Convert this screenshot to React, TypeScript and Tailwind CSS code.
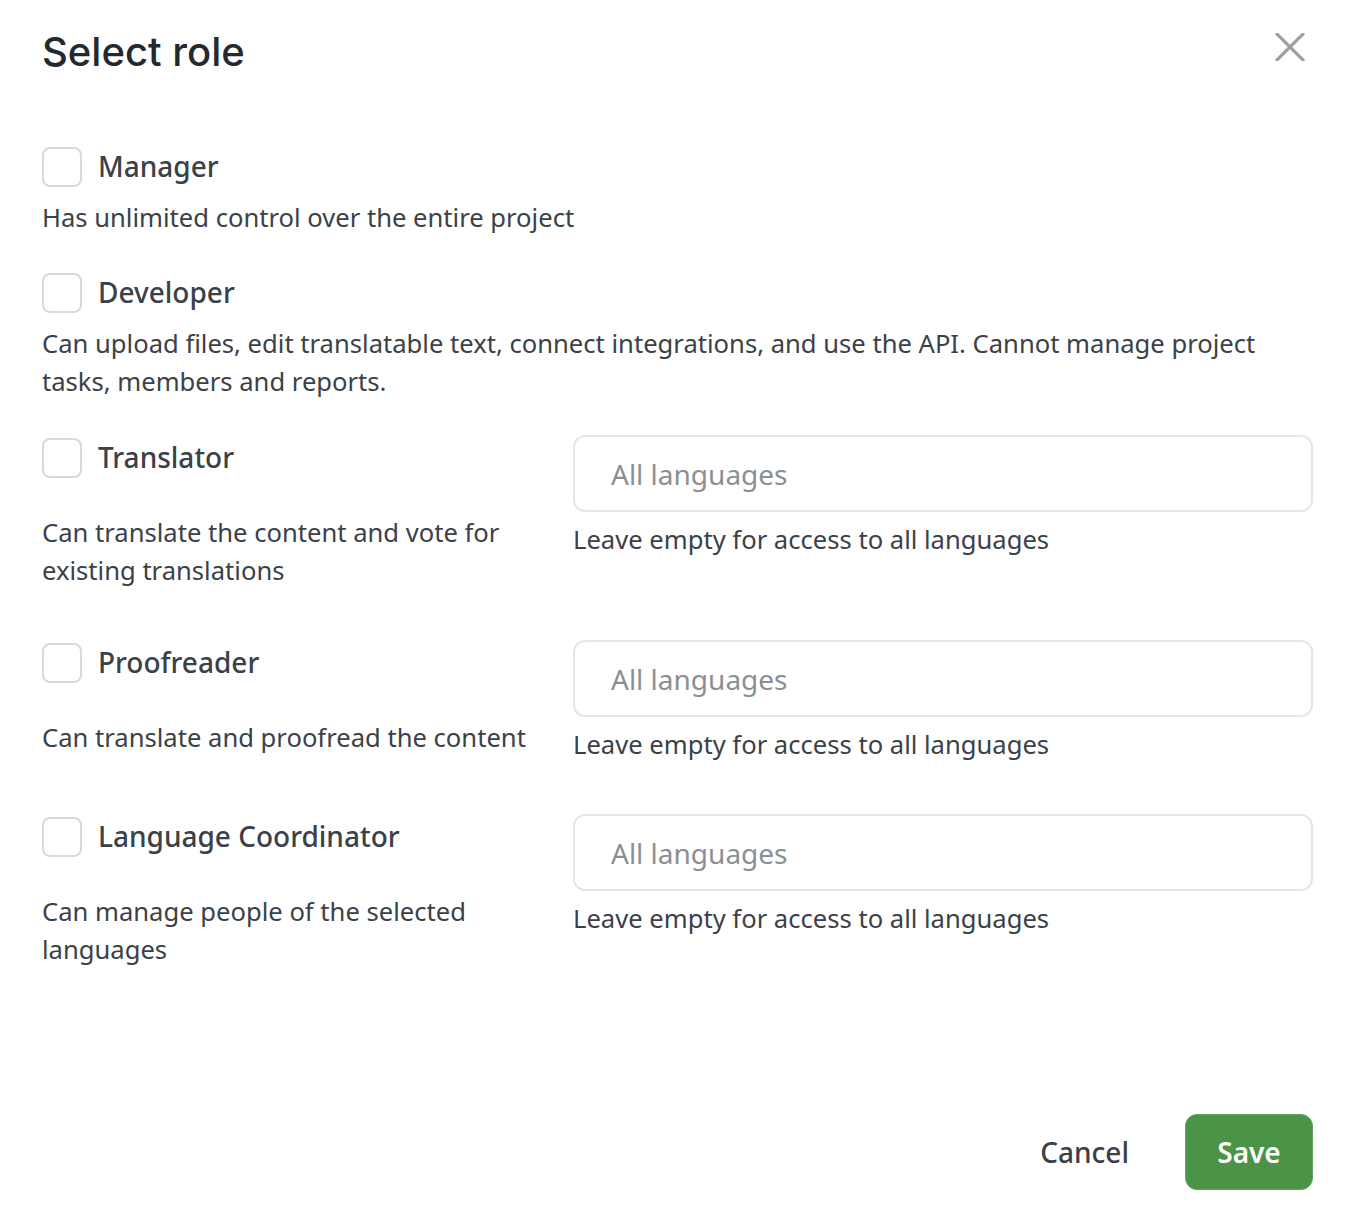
import React from "react";

function Checkbox() {
  return <div className="w-[40px] h-[40px] rounded-[8px] border-2 border-[#d9d9d9] bg-white shrink-0" />;
}

function CheckRow({ label }: { label: string }) {
  return (
    <div className="flex items-center gap-[16px] h-[40px]">
      <Checkbox />
      <span className="text-[28px] font-medium text-[#3b4148] leading-[40px] -translate-y-[1px]">{label}</span>
    </div>
  );
}

function LangRole({ label, desc, className }: { label: string; desc: string; className?: string }) {
  return (
    <div className={"grid grid-cols-[500px_1fr] gap-x-[31px] items-start " + (className ?? "")}>
      <div className="flex flex-col">
        <div className="h-[77px] pt-[3px]">
          <CheckRow label={label} />
        </div>
        <p className="mt-[2px] text-[25.6px] leading-[38px] text-[#3b4148]">{desc}</p>
      </div>
      <div className="flex flex-col">
        <input
          readOnly
          placeholder="All languages"
          className="h-[77px] w-full rounded-[12px] border-2 border-[#e6e6e6] bg-white pl-[36px] text-[28px] text-[#3b4148] placeholder:text-[#8a8f95] outline-none"
          style={{ fontFamily: '"Noto Sans", sans-serif' }}
        />
        <p className="mt-[9px] text-[25.6px] leading-[38px] text-[#3b4148]">Leave empty for access to all languages</p>
      </div>
    </div>
  );
}

export default function App() {
  return (
    <div
      className="w-[1362px] h-[1224px] bg-white pl-[42px] pr-[49px] flex flex-col"
      style={{ fontFamily: '"Noto Sans", sans-serif' }}
    >
      <div className="flex justify-between items-start pt-[28px]">
        <h1
          className="text-[40px] leading-[48px] font-medium text-[#222a30]"
          style={{ fontFamily: 'Inter, "Noto Sans", sans-serif' }}
        >
          Select role
        </h1>
        <svg className="mt-[5px] mr-[8px]" width="30" height="28" viewBox="0 0 30 28" fill="none">
          <path d="M2 1 L28 27 M28 1 L2 27" stroke="#9da1a5" strokeWidth="3.2" strokeLinecap="round" />
        </svg>
      </div>

      <div className="mt-[71px]">
        <CheckRow label="Manager" />
        <p className="mt-[12px] text-[25.6px] leading-[38px] text-[#3b4148]">Has unlimited control over the entire project</p>
      </div>

      <div className="mt-[36px]">
        <CheckRow label="Developer" />
        <p className="mt-[12px] text-[25.6px] leading-[38px] text-[#3b4148]">
          Can upload files, edit translatable text, connect integrations, and use the API. Cannot manage project tasks, members and reports.
        </p>
      </div>

      <LangRole
        className="mt-[34px]"
        label="Translator"
        desc="Can translate the content and vote for existing translations"
      />
      <LangRole className="mt-[50px]" label="Proofreader" desc="Can translate and proofread the content" />
      <LangRole
        className="mt-[50px]"
        label="Language Coordinator"
        desc="Can manage people of the selected languages"
      />

      <div className="mt-auto pb-[34px] flex justify-end items-center gap-[56px]">
        <button className="text-[28px] font-medium text-[#3b4148]">Cancel</button>
        <button className="w-[128px] h-[76px] rounded-[12px] bg-[#4b9346] border border-[#63a55e] text-white text-[28px] font-semibold">
          Save
        </button>
      </div>
    </div>
  );
}
